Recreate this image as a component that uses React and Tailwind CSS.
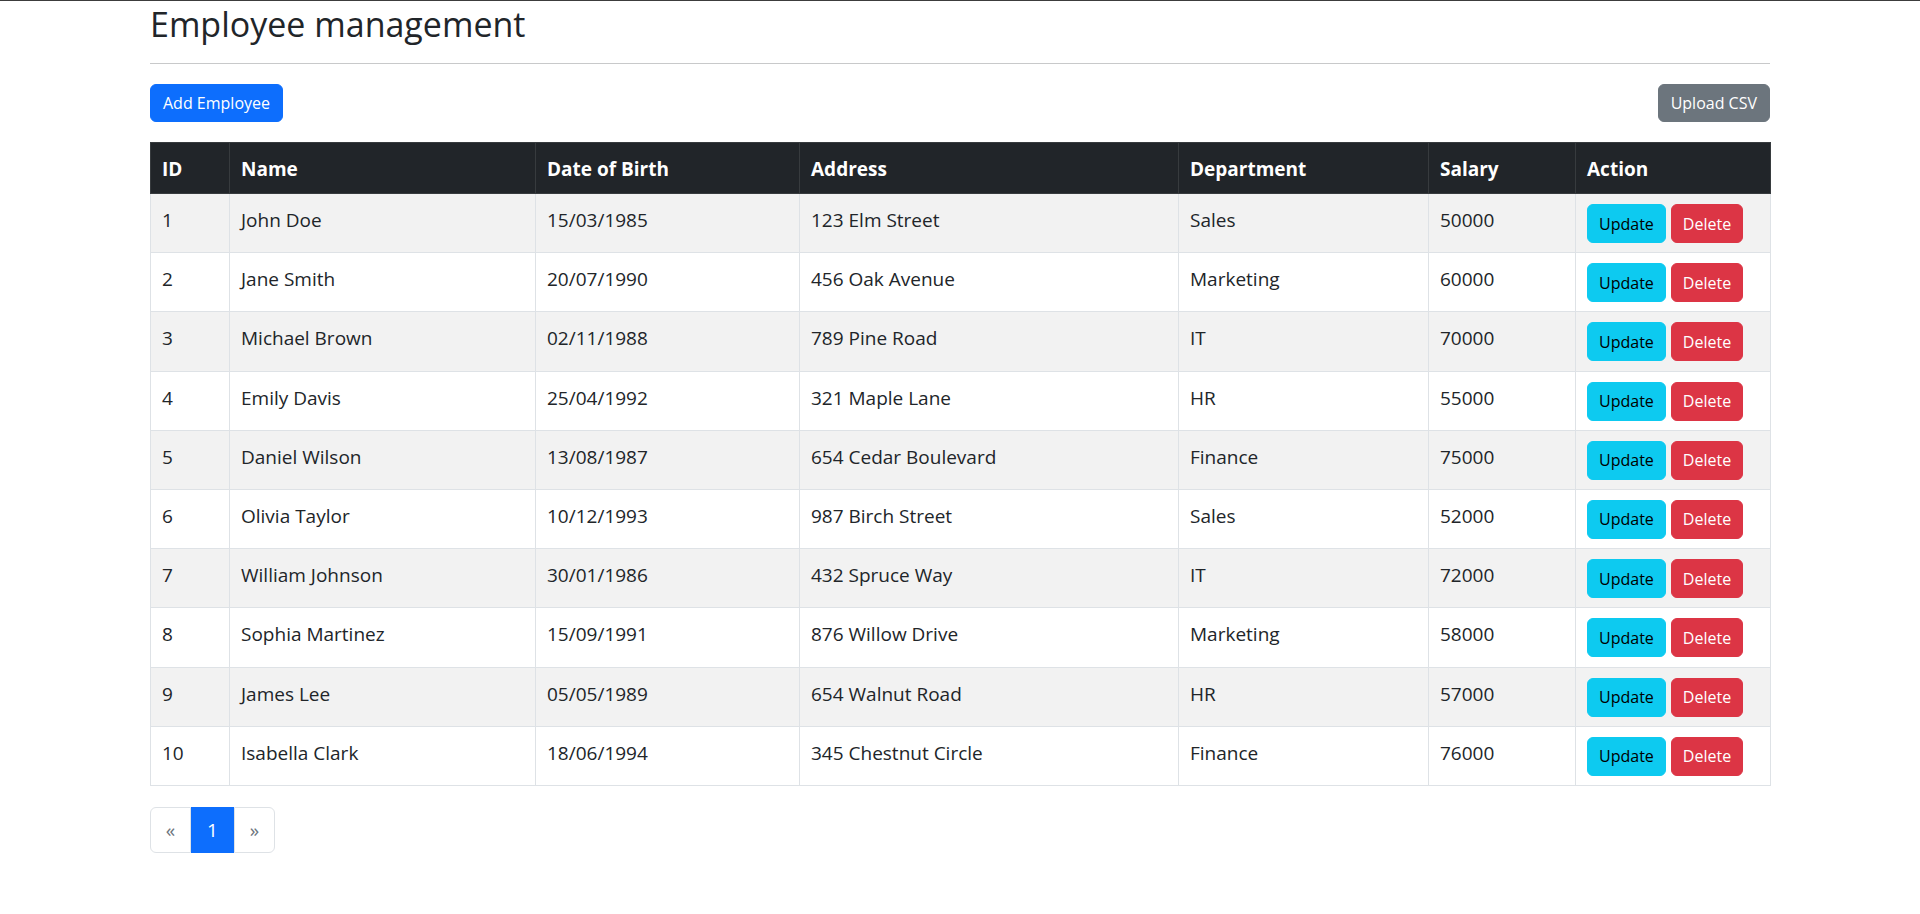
import React from "react";

const employees = [
  { id: 1, name: "John Doe", dob: "15/03/1985", address: "123 Elm Street", dept: "Sales", salary: 50000 },
  { id: 2, name: "Jane Smith", dob: "20/07/1990", address: "456 Oak Avenue", dept: "Marketing", salary: 60000 },
  { id: 3, name: "Michael Brown", dob: "02/11/1988", address: "789 Pine Road", dept: "IT", salary: 70000 },
  { id: 4, name: "Emily Davis", dob: "25/04/1992", address: "321 Maple Lane", dept: "HR", salary: 55000 },
  { id: 5, name: "Daniel Wilson", dob: "13/08/1987", address: "654 Cedar Boulevard", dept: "Finance", salary: 75000 },
  { id: 6, name: "Olivia Taylor", dob: "10/12/1993", address: "987 Birch Street", dept: "Sales", salary: 52000 },
  { id: 7, name: "William Johnson", dob: "30/01/1986", address: "432 Spruce Way", dept: "IT", salary: 72000 },
  { id: 8, name: "Sophia Martinez", dob: "15/09/1991", address: "876 Willow Drive", dept: "Marketing", salary: 58000 },
  { id: 9, name: "James Lee", dob: "05/05/1989", address: "654 Walnut Road", dept: "HR", salary: 57000 },
  { id: 10, name: "Isabella Clark", dob: "18/06/1994", address: "345 Chestnut Circle", dept: "Finance", salary: 76000 },
];

const headers = ["ID", "Name", "Date of Birth", "Address", "Department", "Salary", "Action"];
const widths = ["w-[79px]", "w-[306px]", "w-[264px]", "w-[379px]", "w-[250px]", "w-[147px]", "w-[195px]"];

const App = () => {
  return (
    <div className="min-h-[914px] bg-white border-t border-[#3c3c3c] text-[#212529] font-['Open_Sans',sans-serif]">
      <div className="w-[1620px] mx-auto">
        {/* Title */}
        <h1 className="mt-[3px] text-[34px] leading-[40px] font-medium">Employee management</h1>
        <hr className="mt-[19px] border-t border-[#c8c9ca]" />

        {/* Toolbar */}
        <div className="mt-[20px] flex justify-between">
          <button className="h-[38px] px-[12px] rounded-md bg-[#0d6efd] border border-[#0d6efd] text-white text-[16px] leading-6">
            Add Employee
          </button>
          <button className="h-[38px] px-[12px] rounded-md bg-[#6c757d] border border-[#6c757d] text-white text-[16px] leading-6">
            Upload CSV
          </button>
        </div>

        {/* Table */}
        <table className="mt-[20px] w-full table-fixed border-collapse border border-[#dee2e6] text-[19px]">
          <colgroup>
            {widths.map((w, i) => (
              <col key={i} className={w} />
            ))}
          </colgroup>
          <thead>
            <tr className="h-[51px] bg-[#212529] text-white">
              {headers.map((h) => (
                <th
                  key={h}
                  className="border border-[#373b3e] px-[11px] pt-[12px] pb-[9px] text-left align-top font-bold leading-[28px]"
                >
                  {h}
                </th>
              ))}
            </tr>
          </thead>
          <tbody>
            {employees.map((e, i) => (
              <tr key={e.id} className={`h-[59.2px] ${i % 2 === 0 ? "bg-[#f2f2f2]" : "bg-white"}`}>
                {[e.id, e.name, e.dob, e.address, e.dept, e.salary].map((v, j) => (
                  <td key={j} className="border border-[#dee2e6] px-[11px] pt-[12px] align-top leading-[28px]">
                    {v}
                  </td>
                ))}
                <td className="border border-[#dee2e6] px-[11px] pt-[10px] align-top">
                  <div className="flex gap-[5px]">
                    <button className="h-[39px] px-[11px] rounded-md bg-[#0dcaf0] border border-[#0dcaf0] text-black text-[16px] leading-6">
                      Update
                    </button>
                    <button className="h-[39px] px-[11px] rounded-md bg-[#dc3545] border border-[#dc3545] text-white text-[16px] leading-6">
                      Delete
                    </button>
                  </div>
                </td>
              </tr>
            ))}
          </tbody>
        </table>

        {/* Pagination */}
        <nav className="mt-[21px]">
          <ul className="inline-flex h-[46px] text-[19px]">
            <li className="w-[41px] flex items-center justify-center border border-[#dee2e6] rounded-l-md text-[#6c757d]">
              «
            </li>
            <li className="w-[43px] flex items-center justify-center bg-[#0d6efd] border border-[#0d6efd] text-white">
              1
            </li>
            <li className="w-[41px] flex items-center justify-center border border-[#dee2e6] rounded-r-md text-[#6c757d]">
              »
            </li>
          </ul>
        </nav>
      </div>
    </div>
  );
};

export default App;
